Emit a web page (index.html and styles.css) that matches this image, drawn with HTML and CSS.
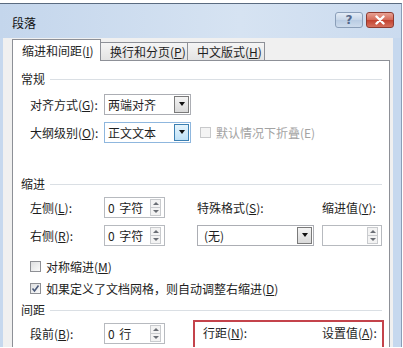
FILE: index.html
```html
<!DOCTYPE html>
<html lang="zh-CN">
  <head>
    <meta charset="UTF-8" />
    <meta name="viewport" content="width=device-width, initial-scale=1.0" />
    <title>段落</title>
    <link rel="stylesheet" href="styles.css">
  </head>
  <body>
    <div class="window">
      <div class="titlebar">
        <span class="title">段落</span>
        <div class="caption">
          <span class="cap-btn help">?</span>
          <span class="cap-btn close">
            <svg width="12" height="10" viewBox="0 0 12 10">
              <path d="M2.5 1.5 L9.5 8.5 M9.5 1.5 L2.5 8.5" stroke="#fff" stroke-width="2.4" stroke-linecap="round" />
            </svg>
          </span>
        </div>
      </div>

      <div class="client">
        <div class="tabs">
          <span class="tab active">缩进和间距(<u>I</u>)</span>
          <span class="tab">换行和分页(<u>P</u>)</span>
          <span class="tab last">中文版式(<u>H</u>)</span>
        </div>

        <div class="panel">
          <!-- 常规 -->
          <div class="group-title">常规</div>
          <div class="row mt6">
            <span class="label">对齐方式(<u>G</u>):</span>
            <div class="select w87">
              <span class="value">两端对齐</span>
              <span class="arrow"></span>
            </div>
          </div>
          <div class="row mt6">
            <span class="label">大纲级别(<u>O</u>):</span>
            <div class="select w87 hot">
              <span class="value">正文文本</span>
              <span class="arrow"></span>
            </div>
            <span class="check disabled"></span>
            <span class="muted">默认情况下折叠(E)</span>
          </div>

          <!-- 缩进 -->
          <div class="group-title mt33">缩进</div>
          <div class="row mt4">
            <span class="label">左侧(<u>L</u>):</span>
            <div class="spin">
              <span class="value">0&nbsp;字符</span>
              <span class="spin-btns"><span class="up"></span><span class="down"></span></span>
            </div>
            <span class="label special">特殊格式(<u>S</u>):</span>
            <span>缩进值(<u>Y</u>):</span>
          </div>
          <div class="row mt6">
            <span class="label">右侧(<u>R</u>):</span>
            <div class="spin">
              <span class="value">0&nbsp;字符</span>
              <span class="spin-btns"><span class="up"></span><span class="down"></span></span>
            </div>
            <div class="select w117 special-select">
              <span class="value">(无)</span>
              <span class="arrow"></span>
            </div>
            <div class="spin w60 by">
              <span class="value"></span>
              <span class="spin-btns"><span class="up"></span><span class="down"></span></span>
            </div>
          </div>
          <div class="checkrow mt12">
            <span class="check"></span>
            <span>对称缩进(<u>M</u>)</span>
          </div>
          <div class="checkrow mt6">
            <span class="check checked">
              <svg width="9" height="9" viewBox="0 0 9 9">
                <path d="M1.5 4.5 L3.5 7 L7.5 1.5" fill="none" stroke="#4b5a7a" stroke-width="1.6" />
              </svg>
            </span>
            <span>如果定义了文档网格，则自动调整右缩进(<u>D</u>)</span>
          </div>

          <!-- 间距 -->
          <div class="group-title mt6">间距</div>
          <div class="spacing">
            <div class="spacing-left">
              <div class="row">
                <span class="label">段前(<u>B</u>):</span>
                <div class="spin">
                  <span class="value">0&nbsp;行</span>
                  <span class="spin-btns"><span class="up"></span><span class="down"></span></span>
                </div>
              </div>
            </div>
            <div class="linebox">
              <div class="linebox-labels">
                <span class="line-label">行距(<u>N</u>):</span>
                <span>设置值(<u>A</u>):</span>
              </div>
              <div class="linebox-ctrls">
                <div class="select w101">
                  <span class="value"></span>
                  <span class="arrow"></span>
                </div>
                <div class="spin w60 by2">
                  <span class="value"></span>
                  <span class="spin-btns"><span class="up"></span><span class="down"></span></span>
                </div>
              </div>
            </div>
          </div>
        </div>
      </div>
    </div>
  </body>
</html>
```

FILE: styles.css
```css
html,
body {
  margin: 0;
  padding: 0;
  overflow: hidden;
  background: #fff;
}
body {
  font-family: "Noto Sans CJK SC", "Microsoft YaHei", sans-serif;
  font-size: 12px;
  color: #1e1e1e;
}
u {
  text-decoration: underline;
  text-underline-offset: 1px;
}

/* window frame */
.window {
  width: 402px;
  height: 344px;
  margin-top: 3px;
  border-top: 1px solid #5a6b80;
  border-right: 1px solid #8a9db7;
  box-sizing: border-box;
  background: #c6d8ee;
  display: flex;
  flex-direction: column;
  overflow: hidden;
}
.titlebar {
  height: 34px;
  flex: none;
  display: flex;
  align-items: center;
  justify-content: space-between;
  padding: 0 7px 0 12px;
  background: linear-gradient(to right, #c4d6ec, #d6e3f2 60%, #cbdbef);
}
.title {
  font-size: 12px;
  color: #111;
  margin-top: 2px;
}
.caption {
  display: flex;
  gap: 3px;
  margin-top: -2px;
}
.cap-btn {
  width: 28px;
  height: 16px;
  box-sizing: border-box;
  border-radius: 3px;
  display: flex;
  align-items: center;
  justify-content: center;
}
.help {
  border: 1px solid #8b9fb9;
  background: linear-gradient(#e4ecf6, #c7d6e8 50%, #b9cce3 51%, #cddbec);
  color: #55688a;
  font-family: "DejaVu Sans", sans-serif;
  font-weight: bold;
  font-size: 12px;
}
.close {
  border: 1px solid #8e3b31;
  background: linear-gradient(#e8a193, #d46a58 50%, #c2412f 51%, #d5705d);
}

/* client area */
.client {
  flex: 1;
  margin: 0 8px 0 3px;
  padding: 1px 3px 0 9px;
  background: #f0f0f0;
  overflow: hidden;
}
.tabs {
  display: flex;
  align-items: flex-end;
  height: 22px;
  position: relative;
  z-index: 1;
  margin-bottom: -1px;
}
.tab {
  height: 19px;
  box-sizing: border-box;
  width: 88px;
  margin-left: -1px;
  border: 1px solid #8d9097;
  background: linear-gradient(#f5f5f5, #e3e3e3);
  padding-left: 9px;
  line-height: 17px;
  white-space: nowrap;
}
.tab.active {
  height: 22px;
  margin-left: 0;
  width: 89px;
  border-bottom: none;
  background: #fff;
  line-height: 22px;
  padding-left: 9px;
}
.tab.last {
  width: 78px;
}
.panel {
  background: #fff;
  border: 1px solid #8d9097;
  padding: 10px 7px 0 8px;
  height: 400px;
}

/* groups */
.group-title {
  display: flex;
  align-items: center;
  gap: 5px;
  height: 16px;
  line-height: 16px;
}
.group-title::after {
  content: "";
  flex: 1;
  border-top: 1px solid #dadfe4;
}
.row {
  display: flex;
  align-items: center;
  height: 22px;
  padding-left: 9px;
  white-space: nowrap;
}
.label {
  width: 74px;
  flex: none;
}
.label.special {
  width: 125px;
  margin-left: 32px;
}
.mt4 { margin-top: 4px; }
.mt6 { margin-top: 6px; }
.mt12 { margin-top: 12px; }
.mt33 { margin-top: 33px; }

/* combo box */
.select {
  display: flex;
  height: 21px;
  box-sizing: border-box;
  border: 1px solid #acaeb4;
  background: #fff;
  padding: 1px;
  flex: none;
}
.select .value {
  flex: 1;
  padding-left: 2px;
  line-height: 17px;
}
.select .arrow {
  width: 13px;
  border: 1px solid #7a7a7a;
  background: linear-gradient(#f4f4f4, #d9d9d9);
  display: flex;
  align-items: center;
  justify-content: center;
}
.select .arrow::before {
  content: "";
  border-left: 3.5px solid transparent;
  border-right: 3.5px solid transparent;
  border-top: 4px solid #111;
}
.select.hot {
  border-color: #8fb7de;
}
.select.hot .arrow {
  border-color: #3c7fb1;
  background: linear-gradient(#e5f4fc, #bfe1f7);
}
.w87 { width: 87px; }
.w101 { width: 101px; }
.w117 { width: 117px; }
.special-select {
  margin-left: 32px;
}
.special-select .value {
  padding-left: 5px;
}

/* spin box */
.spin {
  display: flex;
  align-items: center;
  width: 61px;
  height: 21px;
  box-sizing: border-box;
  border: 1px solid #b7babf;
  background: #fff;
  padding: 1px 3px 1px 3px;
  flex: none;
}
.spin .value {
  flex: 1;
  line-height: 17px;
  word-spacing: 2px;
}
.spin-btns {
  display: flex;
  flex-direction: column;
  width: 11px;
  height: 17px;
  box-sizing: border-box;
  border: 1px solid #c9cbce;
  background: #f3f3f3;
}
.spin-btns span {
  flex: 1;
  display: flex;
  align-items: center;
  justify-content: center;
}
.spin-btns .up {
  border-bottom: 1px solid #c9cbce;
}
.spin-btns span::before {
  content: "";
  border-left: 3px solid transparent;
  border-right: 3px solid transparent;
}
.spin-btns .up::before {
  border-bottom: 3px solid #6a6e75;
}
.spin-btns .down::before {
  border-top: 3px solid #6a6e75;
}
.w60 { width: 60px; }
.spin.by {
  margin-left: 8px;
}
.spin.by2 {
  margin-left: 23px;
}

/* check boxes */
.checkrow {
  display: flex;
  align-items: center;
  gap: 5px;
  height: 16px;
  padding-left: 9px;
  white-space: nowrap;
}
.check {
  width: 11px;
  height: 11px;
  box-sizing: border-box;
  border: 1px solid #8e9095;
  background: linear-gradient(135deg, #dedfe1, #fafafa);
  display: flex;
  align-items: center;
  justify-content: center;
  flex: none;
}
.check.disabled {
  margin-left: 9px;
  border-color: #c8c9cb;
  background: #f4f4f4;
}
.muted {
  color: #a3a3a3;
  margin-left: 5px;
}

/* spacing + marked line box */
.spacing {
  display: flex;
  align-items: flex-start;
  margin-top: 2px;
}
.spacing-left {
  padding-top: 2px;
}
.linebox {
  margin-left: 28px;
  width: 195px;
  height: 60px;
  box-sizing: border-box;
  border: 2px solid #c4434b;
  padding: 3px 0 0 3px;
}
.linebox-labels {
  display: flex;
  height: 16px;
  line-height: 16px;
  white-space: nowrap;
}
.line-label {
  width: 119px;
  margin-left: 5px;
}
.linebox-ctrls {
  display: flex;
  margin-top: 6px;
}
```
